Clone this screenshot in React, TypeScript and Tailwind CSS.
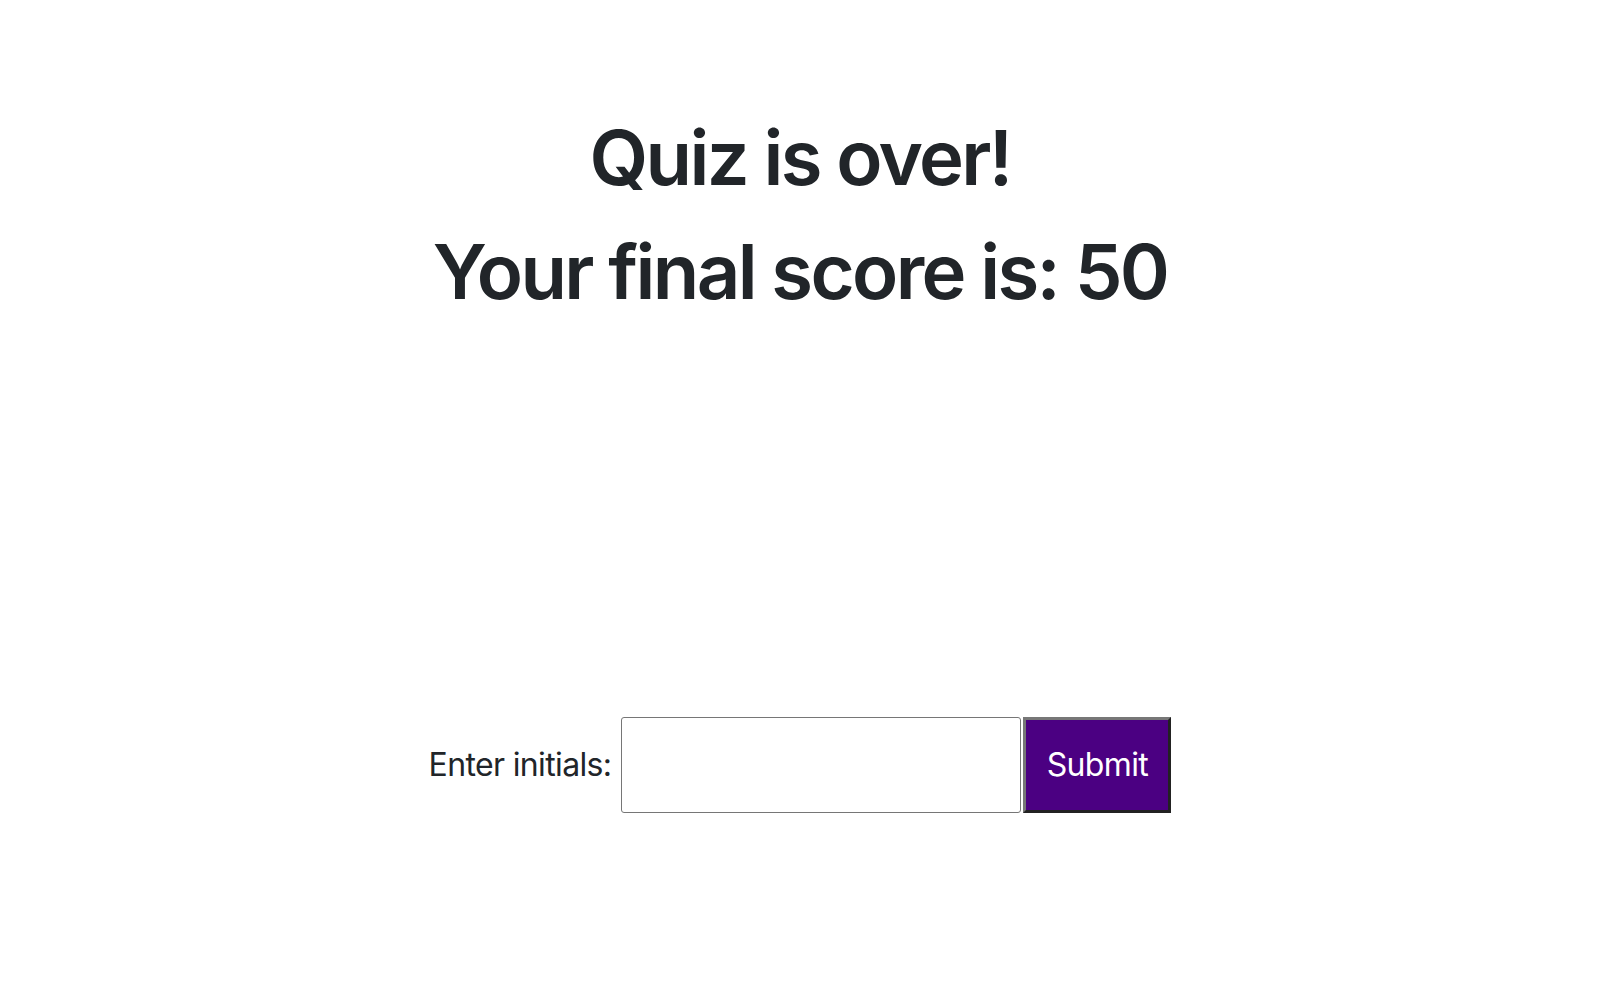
import React from "react";

export default function App() {
  return (
    <div
      className="w-full h-[984px] bg-white text-[#212529] flex flex-col items-center pr-[22px]"
      style={{ fontFamily: "Inter, 'Liberation Sans', sans-serif" }}
    >
      <div className="mt-[100px] flex flex-col items-center">
        <h1 className="text-[76px] leading-[114px] font-semibold tracking-[-0.035em]">Quiz is over!</h1>
        <h1 className="text-[76px] leading-[114px] font-semibold tracking-[-0.035em]">Your final score is: 50</h1>
      </div>
      <div className="mt-[389px] flex items-center">
        <label className="text-[32px] tracking-[-0.02em] mr-[10px]">Enter initials:</label>
        <input
          type="text"
          className="w-[400px] h-[96px] border border-[#767676] rounded-[3px] bg-white"
        />
        <button className="ml-[2px] w-[148px] h-[96px] bg-[#4b0082] text-white text-[32px] tracking-[-0.02em] border-[3px] border-t-[#777777] border-l-[#777777] border-b-[#222222] border-r-[#222222]">
          Submit
        </button>
      </div>
    </div>
  );
}
